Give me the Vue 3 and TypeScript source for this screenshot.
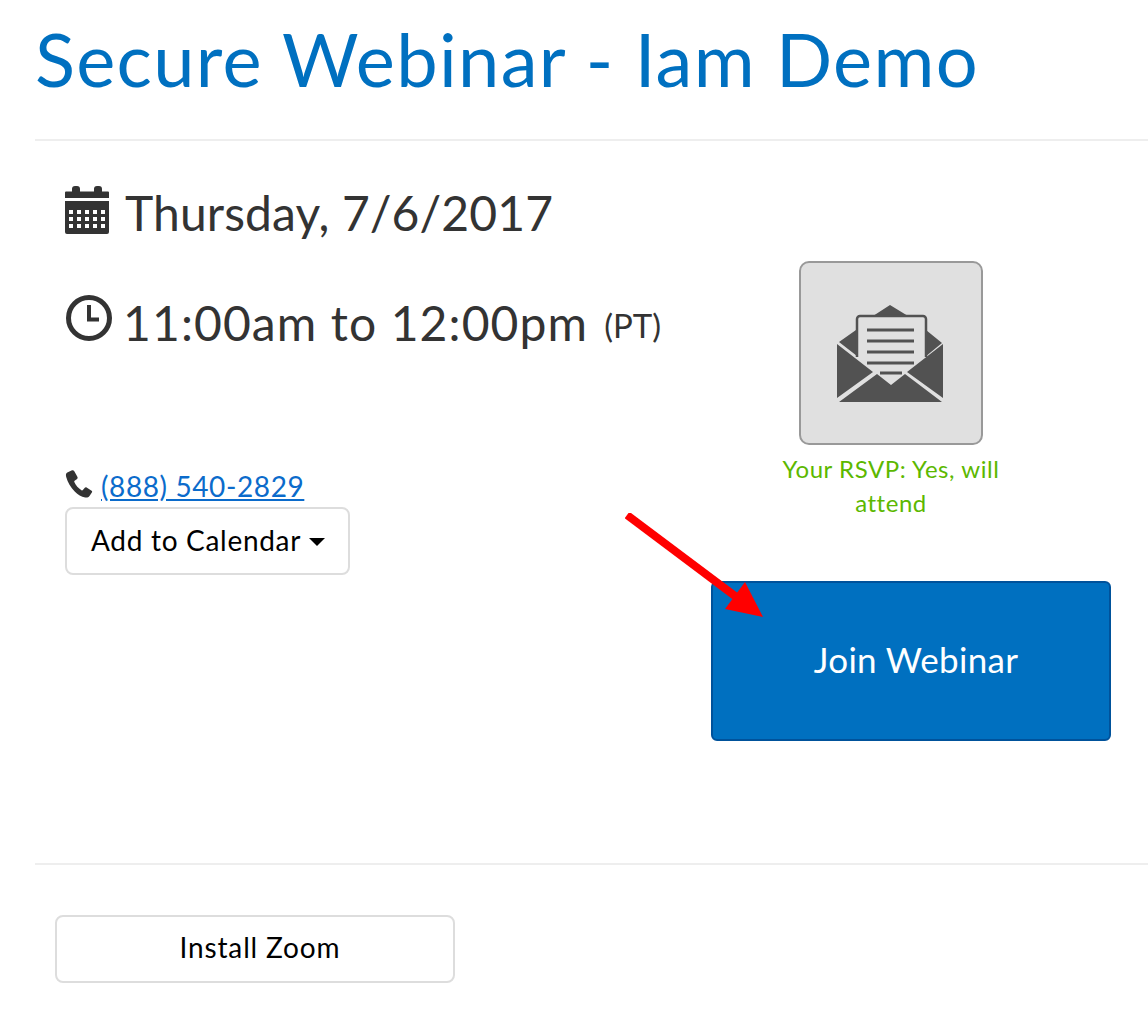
<template>
  <div class="page">
    <h1 class="title">Secure Webinar - Iam Demo</h1>
    <hr class="rule" />
    <div class="details">
      <div class="left">
        <div class="when date">
          <svg class="ico-cal" viewBox="0 0 44 48" aria-hidden="true">
            <path fill="#333" d="M1 5.500h6V3a3 3 0 0 1 3-3h2a3 3 0 0 1 3 3v2.500h14V3a3 3 0 0 1 3-3h2a3 3 0 0 1 3 3v2.500h6a1 1 0 0 1 1 1V12H0V6.500a1 1 0 0 1 1-1z" />
            <path fill="#333" fill-rule="evenodd" d="M0 15h44v31a2 2 0 0 1-2 2H2a2 2 0 0 1-2-2zM4 24v4h4v-4zm8 0v4h4v-4zm8 0v4h4v-4zm8 0v4h4v-4zm8 0v4h4v-4zM4 31v4h4v-4zm8 0v4h4v-4zm8 0v4h4v-4zm8 0v4h4v-4zm8 0v4h4v-4zM4 38v4h4v-4zm8 0v4h4v-4zm8 0v4h4v-4zm8 0v4h4v-4zm8 0v4h4v-4z" />
          </svg>
          <span class="when-text">Thursday, 7/6/2017</span>
        </div>
        <div class="when time">
          <svg class="ico-clock" viewBox="0 0 46 46" aria-hidden="true">
            <circle cx="23" cy="23" r="20.500" fill="none" stroke="#333" stroke-width="5" />
            <path fill="none" stroke="#333" stroke-width="4" d="M23 10v14.500h10" />
          </svg>
          <span class="when-text">11:00am to 12:00pm</span>
          <small>(PT)</small>
        </div>
        <div class="phone">
          <svg class="ico-phone" viewBox="0 0 28 28" aria-hidden="true">
            <path fill="#333" d="M6.500 0.500 2.300 2.600C0.800 3.500 0.700 5 1.200 7c1.500 5.500 4.500 10.500 8.500 14.500 3.300 3.200 6.500 5.200 10.500 6 2 .4 3.300-.4 4.300-1.600l2.500-3.600c.3-.6.200-1.200-.4-1.600l-5-3.200c-.7-.4-1.300-.3-1.800.3l-1.900 2.300c-.4.400-.9.500-1.400.2-3.200-2-5.600-4.800-7.200-8.200-.2-.5-.1-1 .3-1.300l2.500-1.900c.6-.5.700-1.100.4-1.800L9.300 1.300C8.700.3 7.700 0 6.500.500z" />
          </svg>
          <a href="#" class="tel">(888) 540-2829</a>
        </div>
        <button class="btn cal-btn" type="button">Add to Calendar <i class="caret"></i></button>
      </div>
      <div class="right">
        <div class="rsvp">
          <div class="tile">
            <svg class="ico-mail" viewBox="0 0 108 100" aria-hidden="true">
              <path fill="#525252" d="M53 0 71 11H36zM19 25 2 37l18 14zM89 25l16 13-17 14z" />
              <path fill="none" stroke="#525252" stroke-width="2.500" d="M20 52V14a3 3 0 0 1 3-3h63a3 3 0 0 1 3 3v38" />
              <path fill="none" stroke="#525252" stroke-width="3" d="M30 25h47M30 36h47M30 47h47M30 58h47M43 68h22" />
              <path fill="#525252" d="M0 39 36 67 0 93zM106 39 70 67l36 26zM2 97 40 69 54 80 68 69 105 97z" />
            </svg>
          </div>
          <p class="rsvp-text">Your RSVP: Yes, will attend</p>
        </div>
        <div class="join-wrap">
          <button class="join" type="button">Join Webinar</button>
        </div>
      </div>
      <svg class="arrow" viewBox="0 0 140 106" aria-hidden="true">
        <path fill="none" stroke="#f00" stroke-width="8" d="M2 2 110 83" />
        <path fill="#f00" d="M120 69 138 104 100 96z" />
      </svg>
    </div>
    <hr class="rule" />
    <div class="footer">
      <button class="btn install" type="button">Install Zoom</button>
    </div>
  </div>
</template>

<script setup lang="ts">
</script>

<style>
body {
  background: #fff;
  overflow: hidden;
}
</style>

<style scoped>
.page {
  box-sizing: border-box;
  height: 1010px;
  padding-left: 35px;
  font-family: "Lato", "Open Sans", sans-serif;
  color: #333;
}

.title {
  margin: 0;
  height: 139px;
  color: #0070c0;
  font-size: 74px;
  font-weight: 400;
  line-height: 118px;
  letter-spacing: 1.3px;
  white-space: nowrap;
}

.rule {
  margin: 0;
  border: 0;
  border-top: 2px solid #eee;
}

.details {
  position: relative;
  display: flex;
  height: 722px;
  padding-left: 30px;
}

.left {
  width: 646px;
  padding-top: 44px;
}

.when {
  display: flex;
  align-items: center;
  height: 60px;
  font-size: 48px;
  line-height: 60px;
  white-space: nowrap;
}

.when-text {
  margin-top: -4px;
}

.date .when-text {
  letter-spacing: 0.1px;
}

.time {
  margin-top: 50px;
}

.time .when-text {
  letter-spacing: 1.1px;
}

.ico-cal {
  width: 44px;
  height: 48px;
  margin-right: 16px;
  margin-top: -10px;
}

.ico-clock {
  width: 46px;
  height: 46px;
  margin-right: 11px;
  margin-top: -14px;
  margin-left: 1px;
}

.time small {
  margin-left: 16px;
  font-size: 33px;
}

.phone {
  display: flex;
  align-items: center;
  height: 34px;
  margin-top: 114px;
  font-size: 28px;
}

.ico-phone {
  width: 28px;
  height: 28px;
  margin-right: 8px;
  margin-top: -4px;
}

.tel {
  color: #0b6bcb;
  letter-spacing: 0.6px;
}

.btn {
  box-sizing: border-box;
  border: 2px solid #ddd;
  border-radius: 8px;
  background: #fff;
  color: #000;
  font-family: inherit;
  font-size: 28px;
  letter-spacing: 0.7px;
}

.cal-btn {
  display: flex;
  align-items: center;
  gap: 8px;
  height: 68px;
  margin-top: 4px;
  padding: 0 23px 2px 24px;
}

.caret {
  width: 0;
  height: 0;
  margin-top: 4px;
  border-top: 8px solid #000;
  border-left: 8px solid transparent;
  border-right: 8px solid transparent;
}

.right {
  width: 400px;
  padding-top: 120px;
}

.rsvp {
  width: 248px;
  margin-left: 56px;
  text-align: center;
}

.tile {
  display: flex;
  align-items: center;
  justify-content: center;
  box-sizing: border-box;
  width: 184px;
  height: 184px;
  margin: 0 auto;
  border: 2px solid #999;
  border-radius: 10px;
  background: #e0e0e0;
}

.ico-mail {
  width: 108px;
  height: 100px;
  margin-top: 4px;
  filter: blur(0.4px);
}

.rsvp-text {
  margin: 7px 0 0;
  color: #5cb800;
  font-size: 24px;
  line-height: 34px;
  letter-spacing: 0.55px;
}

.join-wrap {
  margin-top: 61px;
}

.join {
  width: 400px;
  height: 160px;
  padding: 0 0 5px 10px;
  border: 2px solid #00529b;
  border-radius: 6px;
  background: #0070c0;
  color: #fff;
  font-family: inherit;
  font-size: 35px;
  letter-spacing: 0.3px;
}

.arrow {
  position: absolute;
  left: 590px;
  top: 372px;
  width: 140px;
  height: 106px;
}

.footer {
  padding: 50px 0 0 20px;
}

.install {
  width: 400px;
  height: 68px;
  padding: 0 0 4px 10px;
  letter-spacing: 0.85px;
}
</style>
